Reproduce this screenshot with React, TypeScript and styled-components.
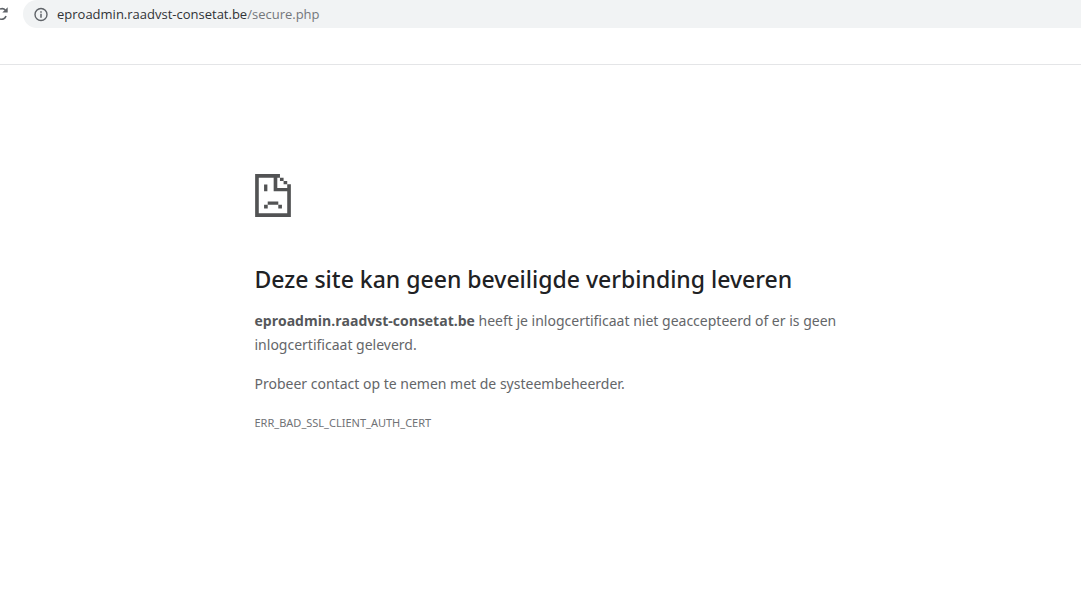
import React from "react";
import styled, { createGlobalStyle } from "styled-components";

const GlobalStyle = createGlobalStyle`
  * { box-sizing: border-box; }
  body {
    margin: 0;
    background: #ffffff;
    font-family: "Noto Sans", "Segoe UI", sans-serif;
    color: #5f6368;
  }
`;

const Toolbar = styled.header`
  display: flex;
  align-items: flex-start;
  height: 65px;
  border-bottom: 1px solid #e4e5e7;
  overflow: hidden;
`;

const IconButton = styled.button`
  display: flex;
  flex: none;
  padding: 0;
  border: 0;
  background: none;
  color: #5f6368;
`;

const ReloadButton = styled(IconButton)`
  width: 23px;
  height: 28px;
  align-items: center;
`;

const AddressBar = styled.form`
  display: flex;
  flex: 1;
  align-items: center;
  height: 28px;
  padding-left: 11px;
  border-radius: 14px 0 0 14px;
  background: #f1f3f4;
  font-family: "Open Sans", "Segoe UI", sans-serif;
  font-size: 13px;
  line-height: 20px;
`;

const HostInput = styled.input`
  field-sizing: content;
  margin: 0 0 0 8px;
  padding: 0;
  border: 0;
  outline: 0;
  background: none;
  color: #303236;
  font: inherit;
`;

const Path = styled.label`
  color: #74777b;
`;

const Content = styled.main`
  width: 100%;
  max-width: 600px;
  margin: 0 auto;
  padding: 109px 0 40px 14px;
  font-size: 14px;
  line-height: 24px;
`;

const Sad = styled.svg`
  display: block;
`;

const Title = styled.h1`
  margin: 44px 0 12px;
  color: #202124;
  font-size: 23px;
  font-weight: 500;
  line-height: 36px;
`;

const Text = styled.p`
  margin: 0 0 15px;
  color: #646669;
`;

const Host = styled.strong`
  color: #55575a;
  font-family: "Open Sans", "Segoe UI", sans-serif;
  font-weight: 700;
`;

const ErrorCode = styled.div`
  color: #707276;
  font-size: 11px;
  line-height: 24px;
`;

export default function App() {
  return (
    <>
      <GlobalStyle />
      <Toolbar>
        <ReloadButton type="button" aria-label="Vernieuwen">
          <svg width="9" height="16" viewBox="0 0 9 16" fill="none">
            <path d="M0 3.1C2.3 2.1 4.4 2.9 5.5 4.4M0 12.9c2.8 1.1 5.3-.5 6-2.9" stroke="currentColor" strokeWidth="1.6" />
            <path d="M7.7 1.2v5.4H2.3z" fill="currentColor" />
          </svg>
        </ReloadButton>
        <AddressBar onSubmit={(e) => e.preventDefault()}>
          <IconButton type="button" aria-label="Sitegegevens">
            <svg width="15" height="15" viewBox="0 0 15 15" fill="none">
              <circle cx="7" cy="7.5" r="6" stroke="currentColor" strokeWidth="1.4" />
              <path d="M7 6.8v3.9M7 4.2v1.5" stroke="currentColor" strokeWidth="1.5" />
            </svg>
          </IconButton>
          <HostInput id="address" aria-label="Adres" defaultValue="eproadmin.raadvst-consetat.be" spellCheck={false} />
          <Path htmlFor="address">/secure.php</Path>
        </AddressBar>
      </Toolbar>
      <Content>
        <Sad width="36" height="43" viewBox="30 27 108 130" fill="#525354" aria-hidden="true">
          <path fillRule="evenodd" d="M30 27H105V38H97V69H127V58H138V157H30ZM41 38V146H127V79H86V38Z" />
          <path d="M105 38h11v10h-11zM116 48h11v10h-11zM57 59h10v20H57zM68 110h32v10H68zM57 120h11v11H57zM100 120h11v11h-11z" />
        </Sad>
        <Title>Deze site kan geen beveiligde verbinding leveren</Title>
        <Text>
          <Host>eproadmin.raadvst-consetat.be</Host> heeft je inlogcertificaat niet geaccepteerd of er is geen
          inlogcertificaat geleverd.
        </Text>
        <Text>Probeer contact op te nemen met de systeembeheerder.</Text>
        <ErrorCode>ERR_BAD_SSL_CLIENT_AUTH_CERT</ErrorCode>
      </Content>
    </>
  );
}
